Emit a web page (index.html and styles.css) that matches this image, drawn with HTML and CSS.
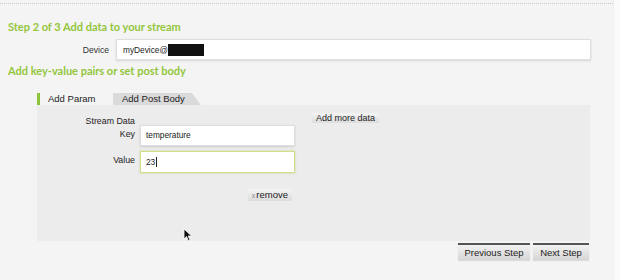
FILE: index.html
```html
<!DOCTYPE html>
<html>
<head>
<meta charset="utf-8">
<link rel="stylesheet" href="styles.css">
</head>
<body>
<div class="page">
  <div class="topline"></div>
  <h2 class="title">Step 2 of 3 Add data to your stream</h2>
  <div class="device-row">
    <label class="device-label">Device</label>
    <div class="input device-input">myDevice@<span class="redact"></span></div>
  </div>
  <h2 class="title title2">Add key-value pairs or set post body</h2>
  <div class="tabs">
    <div class="tab active">Add Param</div>
    <div class="tab inactive">Add Post Body</div>
  </div>
  <div class="panel">
    <div class="form">
      <div class="lbl lbl-stream">Stream Data</div>
      <div class="spacer"></div>
      <div class="more-cell"><span class="small-btn">Add more data</span></div>
      <div class="lbl lbl-key">Key</div>
      <div class="input field">temperature</div>
      <div></div>
      <div class="lbl lbl-value">Value</div>
      <div class="input field focused">23<span class="caret"></span></div>
      <div></div>
      <div></div>
      <div class="remove-cell"><span class="small-btn remove"><span class="x">x</span>remove</span></div>
      <div></div>
    </div>
    <svg class="pointer" width="10" height="14" viewBox="0 0 10 14"><path d="M1 1 L1 11 L3.5 8.6 L5.4 12.8 L7 12.1 L5.2 8 L8.6 8 Z" fill="#111" stroke="#fff" stroke-width="0.8"/></svg>
  </div>
  <div class="actions">
    <span class="step-btn prev">Previous Step</span>
    <span class="step-btn next">Next Step</span>
  </div>
</div>
</body>
</html>
```
FILE: styles.css
```css
html, body {
  margin: 0;
  padding: 0;
  background: #fafafa;
}
body {
  font-family: "Liberation Sans", Arial, sans-serif;
  color: #222;
  width: 620px;
  height: 280px;
  overflow: hidden;
}
.page {
  width: 613px;
  height: 280px;
  background: #f4f4f4;
  border-right: 1px solid #f0f0f0;
  position: relative;
}
.topline {
  height: 3px;
  border-bottom: 1px dotted #c8c8c8;
}
.title {
  margin: 16px 0 0 8px;
  font-family: "Lato", "Liberation Sans", sans-serif;
  font-weight: 700;
  font-size: 11px;
  line-height: 14px;
  color: #93c63c;
}
.title2 {
  margin-top: 4px;
}
.device-row {
  display: flex;
  align-items: center;
  margin-top: 5px;
}
.device-label {
  width: 109px;
  text-align: right;
  font-size: 8.6px;
  color: #333;
  margin-right: 7px;
}
.input {
  box-sizing: border-box;
  background: #fff;
  border: 1px solid #dedede;
  box-shadow: 0 1px 2px rgba(0,0,0,0.12);
  font-size: 8.3px;
  color: #222;
  display: flex;
  align-items: center;
  padding-left: 5px;
}
.device-input {
  width: 475px;
  height: 21px;
  padding-left: 6px;
}
.redact {
  display: inline-block;
  width: 36px;
  height: 12px;
  background: #111;
}
.tabs {
  display: flex;
  margin: 15px 0 0 37px;
  height: 12px;
}
.tab {
  font-size: 9.5px;
  line-height: 12px;
  color: #222;
}
.tab.active {
  border-left: 3px solid #8fc43a;
  padding-left: 8px;
  width: 65px;
}
.tab.inactive {
  background: #dadada;
  padding: 0 16px 0 9px;
  clip-path: polygon(0 0, calc(100% - 9px) 0, 100% 100%, 0 100%);
}
.panel {
  margin-left: 37px;
  width: 553px;
  height: 136px;
  background: #ececec;
  position: relative;
}
.form {
  display: grid;
  grid-template-columns: 98px 155px auto;
  column-gap: 5px;
  padding-top: 8px;
  font-size: 9px;
  line-height: 11px;
}
.lbl {
  text-align: right;
  font-size: 8.8px;
  line-height: 11px;
  color: #222;
}
.lbl-stream {
  padding-top: 3px;
  height: 9px;
}
.lbl-key {
  padding-top: 4px;
}
.lbl-value {
  padding-top: 4px;
  margin-top: 5px;
}
.field {
  height: 21px;
}
.field.focused {
  margin-top: 5px;
  height: 22px;
  border: 1px solid #cfe08a;
  box-shadow: 0 0 2px rgba(180,205,90,0.6);
}
.caret {
  display: inline-block;
  width: 1px;
  height: 10px;
  background: #222;
  margin-left: 1px;
}
.more-cell {
  padding-left: 12px;
  height: 12px;
  line-height: 10px;
}
.small-btn {
  display: inline-block;
  font-size: 9px;
  line-height: 10px;
  padding: 0 4px;
  color: #222;
  background: linear-gradient(#f4f4f4, #dcdcdc);
}
.remove-cell {
  text-align: right;
  padding-right: 3px;
  margin-top: 16px;
  line-height: 11px;
}
.remove {
  font-size: 9.5px;
  line-height: 11px;
}
.remove .x {
  font-size: 7px;
  color: #888;
  margin-right: 1px;
}
.pointer {
  position: absolute;
  left: 146px;
  top: 123px;
}
.actions {
  display: flex;
  justify-content: flex-end;
  gap: 3px;
  width: 589px;
  margin-top: 2px;
}
.step-btn {
  font-size: 9.5px;
  line-height: 15px;
  text-align: center;
  white-space: nowrap;
  color: #222;
  border-top: 2px solid #555;
  background: linear-gradient(#f2f2f2, #d6d6d6);
  box-shadow: 0 1px 1px rgba(0,0,0,0.1);
}
.step-btn.prev {
  width: 72px;
}
.step-btn.next {
  width: 56px;
}
```
